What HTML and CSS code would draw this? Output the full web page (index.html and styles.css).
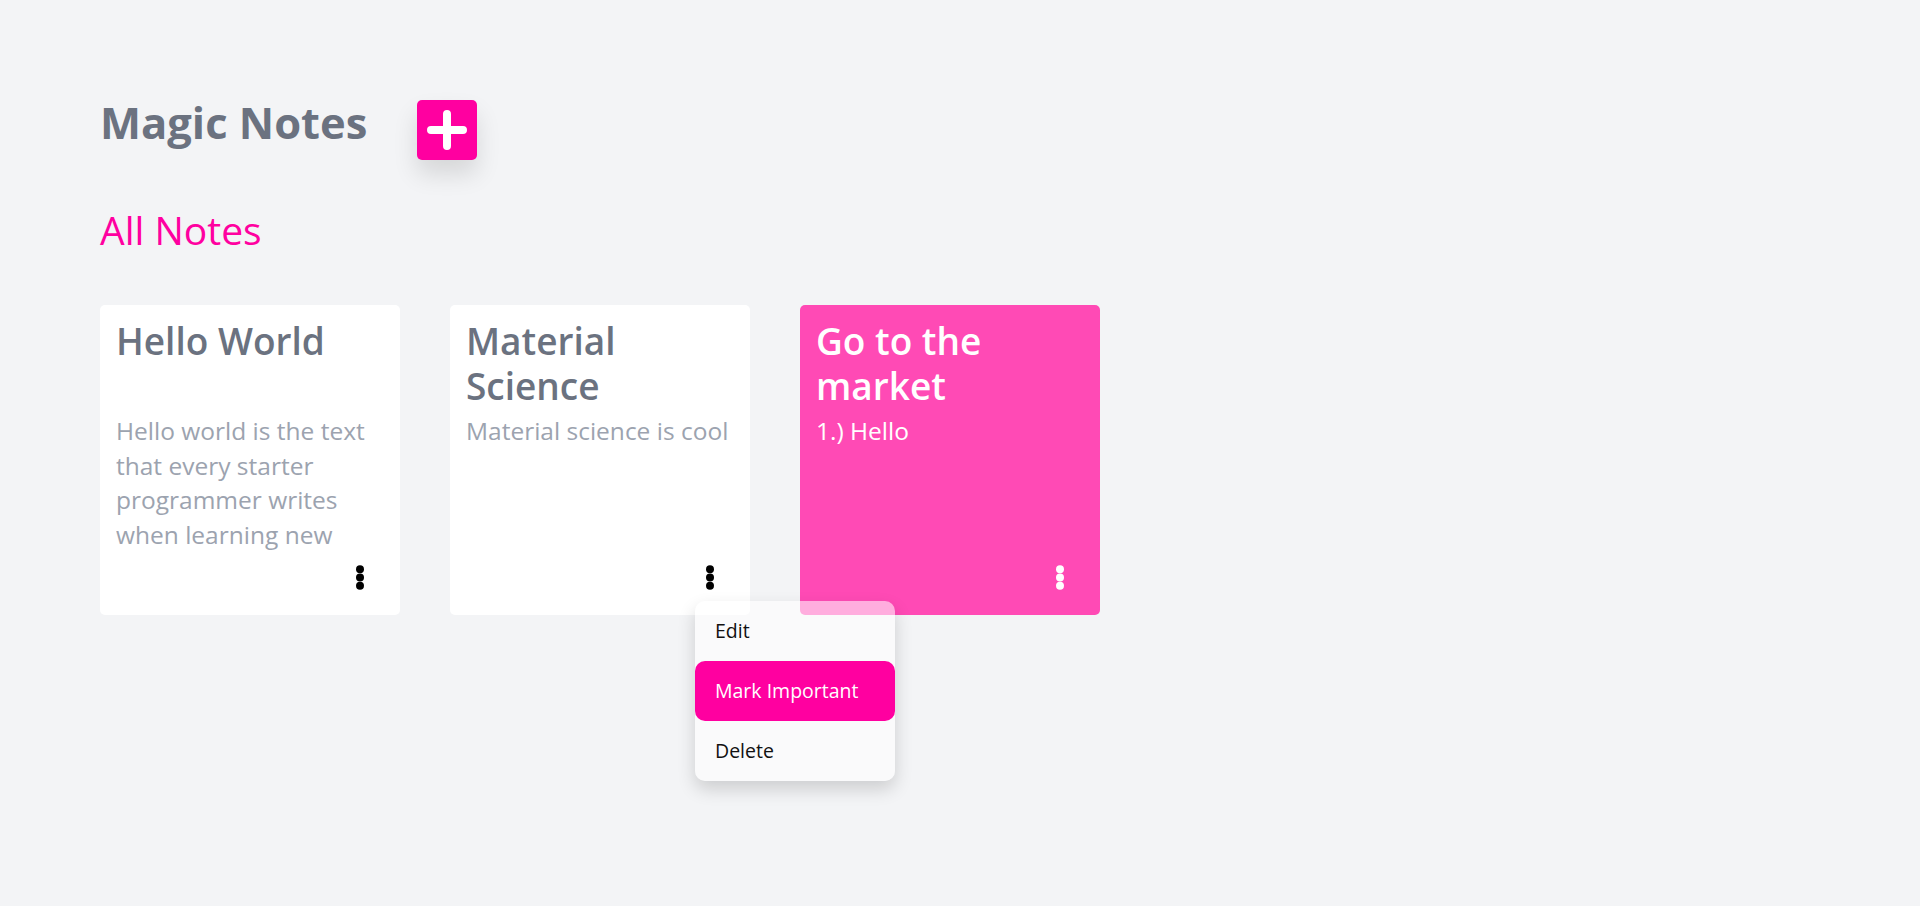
FILE: index.html
```html
<!DOCTYPE html>
<html lang="en">
<head>
<meta charset="utf-8">
<title>Magic Notes</title>
<link rel="stylesheet" href="styles.css">
</head>
<body>
<div class="app">
  <header class="header">
    <h1 class="brand">Magic Notes</h1>
    <button class="add-btn" aria-label="Add note">
      <svg width="40" height="40" viewBox="0 0 40 40"><path d="M4 20H36M20 4V36" stroke="#fff" stroke-width="8" stroke-linecap="round" fill="none"/></svg>
    </button>
  </header>
  <h2 class="section-title">All Notes</h2>
  <div class="notes">
    <article class="note">
      <h3 class="note-title">Hello World</h3>
      <p class="note-body">Hello world is the text that every starter programmer writes when learning new</p>
      <div class="note-footer">
        <button class="more" aria-label="More"><svg width="8" height="25" viewBox="0 0 8 25"><circle cx="4" cy="4.2" r="4"/><circle cx="4" cy="12.5" r="4"/><circle cx="4" cy="20.8" r="4"/></svg></button>
      </div>
    </article>
    <article class="note">
      <h3 class="note-title">Material Science</h3>
      <p class="note-body">Material science is cool</p>
      <div class="note-footer">
        <button class="more" aria-label="More"><svg width="8" height="25" viewBox="0 0 8 25"><circle cx="4" cy="4.2" r="4"/><circle cx="4" cy="12.5" r="4"/><circle cx="4" cy="20.8" r="4"/></svg></button>
      </div>
      <ul class="menu">
        <li class="menu-item">Edit</li>
        <li class="menu-item active">Mark Important</li>
        <li class="menu-item">Delete</li>
      </ul>
    </article>
    <article class="note important">
      <h3 class="note-title">Go to the market</h3>
      <p class="note-body">1.) Hello</p>
      <div class="note-footer">
        <button class="more" aria-label="More"><svg width="8" height="25" viewBox="0 0 8 25"><circle cx="4" cy="4.2" r="4"/><circle cx="4" cy="12.5" r="4"/><circle cx="4" cy="20.8" r="4"/></svg></button>
      </div>
    </article>
  </div>
</div>
</body>
</html>
```
FILE: styles.css
```css
* { box-sizing: border-box; }
html, body { margin: 0; padding: 0; }
body {
  background: #f3f4f6;
  font-family: "Open Sans", "Noto Sans", sans-serif;
  min-height: 906px;
}
.app {
  padding: 97px 100px 0 100px;
}
.header {
  display: flex;
  align-items: flex-start;
  gap: 50px;
}
.brand {
  margin: 0;
  font-size: 43.5px;
  line-height: 52px;
  font-weight: 700;
  color: #6b7280;
}
.add-btn {
  margin-top: 3px;
  width: 60px;
  height: 60px;
  border: none;
  border-radius: 5px;
  background: #ff00a0;
  display: flex;
  align-items: center;
  justify-content: center;
  padding: 0;
  box-shadow: 0 14px 24px rgba(0, 0, 0, 0.12);
}
.section-title {
  margin: 47px 0 0 0;
  font-size: 39px;
  line-height: 46px;
  font-weight: 400;
  color: #ff00a0;
}
.notes {
  margin-top: 52px;
  display: flex;
  gap: 50px;
}
.note {
  position: relative;
  width: 300px;
  height: 310px;
  background: #fff;
  border-radius: 5px;
  padding: 13px 16px 25px 16px;
  display: flex;
  flex-direction: column;
}
.note-title {
  margin: 0;
  height: 90px;
  font-size: 37px;
  line-height: 45px;
  font-weight: 600;
  color: #6b7280;
}
.note-body {
  margin: 6px 0 0 0;
  font-size: 24.5px;
  line-height: 34.5px;
  height: 138px;
  overflow: hidden;
  color: #9ca3af;
}
.note-footer {
  margin-top: auto;
  display: flex;
  justify-content: flex-end;
  padding-right: 20px;
}
.more {
  border: none;
  background: none;
  padding: 0;
  width: 8px;
  height: 25px;
  display: block;
  fill: #000;
}
.more svg { display: block; }
.important { background: #ff4ab5; }
.important .note-title,
.important .note-body { color: #fff; }
.important .more { fill: #fff; }
.menu {
  position: absolute;
  z-index: 10;
  left: 245px;
  top: 296px;
  width: 200px;
  margin: 0;
  padding: 0;
  list-style: none;
  background: rgba(255, 255, 255, 0.55);
  border-radius: 10px;
  box-shadow: 0 8px 18px rgba(0, 0, 0, 0.16);
}
.menu-item {
  height: 60px;
  line-height: 60px;
  padding: 0 20px;
  font-size: 19.5px;
  color: #111;
  border-radius: 10px;
}
.menu-item.active {
  background: #ff00a0;
  color: #fff;
}
```
